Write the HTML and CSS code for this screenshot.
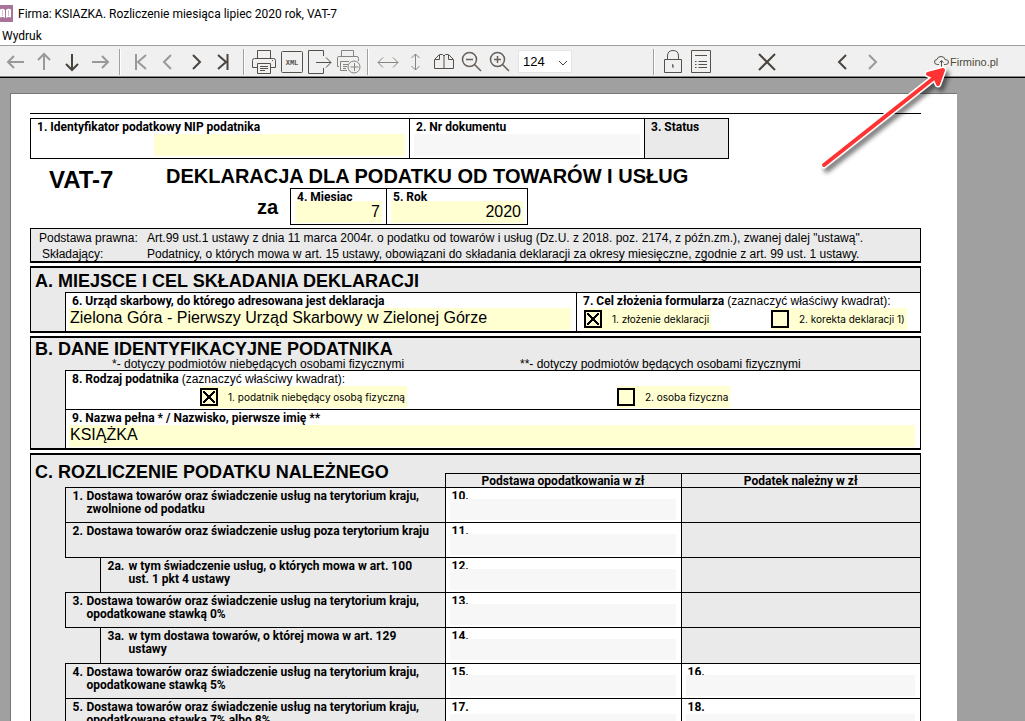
FILE: index.html
```html
<!DOCTYPE html>
<html lang="pl">
<head>
<meta charset="utf-8">
<title>Firma: KSIAZKA. Rozliczenie miesiąca lipiec 2020 rok, VAT-7</title>
<link rel="stylesheet" href="styles.css">
</head>
<body>
<header class="titlebar">
  <svg class="app-icon" width="13" height="17" viewBox="0 0 13 17" aria-hidden="true"><rect width="13" height="17" fill="#a8749a"/><path d="M0 4.500Q3 3 5 5V13Q3 11.500 0 12.500ZM6 5Q8 3 11 4.500V12.500Q8 11.500 6 13Z" fill="#fff"/><path d="M2.500 5V11M8.500 5V11" stroke="#d9bfd0"/></svg>
  <h1 class="window-title">Firma: KSIAZKA. Rozliczenie miesiąca lipiec 2020 rok, VAT-7</h1>
</header>
<nav class="menubar"><button class="menu-item">Wydruk</button></nav>

<div class="toolbar" role="toolbar" aria-label="Podgląd wydruku">
  <div class="group">
    <button class="tool dim" aria-label="W lewo"><svg viewBox="0 0 28 28"><path d="M22 14H6M12 8L6 14L12 20"/></svg></button>
    <button class="tool dim" aria-label="W górę"><svg viewBox="0 0 28 28"><path d="M14 22V6M8 12L14 6L20 12"/></svg></button>
    <button class="tool" aria-label="W dół"><svg viewBox="0 0 28 28"><path d="M14 6V22M8 16L14 22L20 16"/></svg></button>
    <button class="tool dim" aria-label="W prawo"><svg viewBox="0 0 28 28"><path d="M6 14H22M16 8L22 14L16 20"/></svg></button>
  </div>
  <div class="group">
    <button class="tool dim" aria-label="Pierwsza strona"><svg viewBox="0 0 28 28"><path d="M10 6V22M20 7L12 14L20 21"/></svg></button>
    <button class="tool dim" aria-label="Poprzednia strona"><svg viewBox="0 0 28 28"><path d="M17 7L10 14L17 21"/></svg></button>
    <button class="tool" aria-label="Następna strona"><svg viewBox="0 0 28 28"><path d="M11 7L18 14L11 21"/></svg></button>
    <button class="tool" aria-label="Ostatnia strona"><svg viewBox="0 0 28 28"><path d="M8 7L16 14L8 21M17.500 6V22"/></svg></button>
  </div>
  <div class="group">
    <button class="tool thin" aria-label="Drukuj"><svg viewBox="0 0 28 28"><path d="M7.500 10V2.500H20.500V10M7 19.500H2.500V12.500Q2.500 10.500 4.500 10.500H23.500Q25.500 10.500 25.500 12.500V19.500H21M7.500 15.500H20.500V25.500H7.500ZM10 18.500H18M10 20.500H18M10 22.500H15M22 12.500H23"/></svg></button>
    <button class="tool thin" aria-label="XML"><svg viewBox="0 0 28 28"><rect x="3.500" y="3.500" width="21" height="21" rx="1"/><text class="xml" x="14" y="17">XML</text></svg></button>
    <button class="tool thin" aria-label="Eksport"><svg viewBox="0 0 28 28"><path d="M17.500 8V2.500H2.500V25.500H17.500V20M10 14.500H25M20 9.500L25 14.500L20 19.500"/></svg></button>
    <button class="tool thin soft" aria-label="Dodaj wydruk"><svg viewBox="0 0 28 28"><path d="M7.500 8V2.500H19.500V8M5 18.500H3.500V9.500Q3.500 8.500 5 8.500H23Q24.500 8.500 24.500 10.500V13M6.500 13.500H15M6.500 13.500V22.500H13M9 16.500H14M9 18.500H13M9 20.500H12M20.500 15V23M16.500 19H24.500"/><circle cx="20" cy="19" r="6"/></svg></button>
  </div>
  <div class="group">
    <button class="tool thin soft" aria-label="Szerokość strony"><svg viewBox="0 0 28 28"><path d="M4 14.500H24M9 9.500L4 14.500L9 19.500M19 9.500L24 14.500L19 19.500"/></svg></button>
    <button class="tool thin soft" aria-label="Wysokość strony"><svg viewBox="0 0 28 28"><path d="M13.500 6V22M9.500 10L13.500 6L17.500 10M9.500 18L13.500 22L17.500 18"/></svg></button>
    <button class="tool thin" aria-label="Cała strona"><svg viewBox="0 0 28 28"><path d="M14 20.500H4.500V11.500L9.500 6.500H12.500L14 8L15.500 6.500H18.500L23.500 11.500V20.500H14V8M9.500 7V11.500H5M18.500 7V11.500H23"/></svg></button>
    <button class="tool mid" aria-label="Pomniejsz"><svg viewBox="0 0 28 28"><circle cx="11.500" cy="11.500" r="7"/><path d="M16.500 16.500L23 23M8 11.500H15"/></svg></button>
    <button class="tool mid" aria-label="Powiększ"><svg viewBox="0 0 28 28"><circle cx="11.500" cy="11.500" r="7"/><path d="M16.500 16.500L23 23M8 11.500H15M11.500 8V15"/></svg></button>
    <div class="zoom">
      <select class="zoom-select" aria-label="Powiększenie"><option>124</option></select>
      <svg class="zoom-chevron" width="10" height="6" viewBox="0 0 10 6" aria-hidden="true"><path d="M1 1L5 5L9 1"/></svg>
    </div>
  </div>
  <div class="group after-zoom">
    <button class="tool thin" aria-label="Zablokuj"><svg viewBox="0 0 28 28"><path d="M4.500 11.500H21.500V24.500H4.500ZM7.500 11V8Q7.500 2.500 13 2.500T18.500 8V11M13 16.500V20M12.500 16.500V18.500"/></svg></button>
    <button class="tool thin" aria-label="Lista"><svg viewBox="0 0 28 28"><path d="M3.500 2.500H22.500V24.500H3.500ZM7 7.500H19M10.500 13.500H19M10.500 16.500H19M10.500 19.500H19M7 13.500H8.500M7 16.500H8.500M7 19.500H8.500"/></svg></button>
  </div>
  <button class="tool close" aria-label="Zamknij"><svg viewBox="0 0 28 28"><path d="M6 6L22 22M22 6L6 22"/></svg></button>
  <div class="paging">
    <button class="tool" aria-label="Wstecz"><svg viewBox="0 0 28 28"><path d="M17 7L10 14L17 21"/></svg></button>
    <button class="tool dim" aria-label="Dalej"><svg viewBox="0 0 28 28"><path d="M10 7L17 14L10 21"/></svg></button>
  </div>
  <button class="cloud"><svg width="15" height="13" viewBox="0 0 15 13" aria-hidden="true"><path d="M5 9.500H3.500Q.500 9.500 .500 7T3 4.500Q3.500 1.500 7 1.500T11 4.500Q14.500 4.500 14.500 7T11.500 9.500H10M7.500 12V5.500M5.500 7.500L7.500 5.500L9.500 7.500"/></svg>Firmino.pl</button>
</div>

<main class="workspace">
  <form class="page">
    <div class="ident">
      <div class="box nip"><label class="cap" for="f1">1. Identyfikator podatkowy NIP podatnika</label><input class="field" id="f1"></div>
      <div class="box docno"><label class="cap" for="f2">2. Nr dokumentu</label><input class="field grey" id="f2"></div>
      <div class="box status"><span class="cap">3. Status</span></div>
    </div>

    <div class="heading">
      <h2 class="code">VAT-7</h2>
      <div class="heading-main">
        <h2 class="form-title">DEKLARACJA DLA PODATKU OD TOWARÓW I USŁUG</h2>
        <div class="period">
          <span class="za">za</span>
          <div class="period-boxes">
            <div class="box month"><label class="cap" for="f4">4. Miesiąc</label><input class="field num" id="f4" value="7"></div>
            <div class="box year"><label class="cap" for="f5">5. Rok</label><input class="field num" id="f5" value="2020"></div>
          </div>
        </div>
      </div>
    </div>

    <dl class="legal">
      <dt>Podstawa prawna:</dt><dd>Art.99 ust.1 ustawy z dnia 11 marca 2004r. o podatku od towarów i usług (Dz.U. z 2018. poz. 2174, z późn.zm.), zwanej dalej "ustawą".</dd>
      <dt class="second">Składający:</dt><dd>Podatnicy, o których mowa w art. 15 ustawy, obowiązani do składania deklaracji za okresy miesięczne, zgodnie z art. 99 ust. 1 ustawy.</dd>
    </dl>

    <section class="section">
      <h3 class="section-title">A. MIEJSCE I CEL SKŁADANIA DEKLARACJI</h3>
      <div class="rows">
        <div class="row split">
          <div class="cell office"><label class="cap" for="f6">6. Urząd skarbowy, do którego adresowana jest deklaracja</label><input class="field text" id="f6" value="Zielona Góra - Pierwszy Urząd Skarbowy w Zielonej Górze"></div>
          <div class="cell purpose"><span class="cap">7. Cel złożenia formularza <span class="plain">(zaznaczyć właściwy kwadrat):</span></span>
            <div class="options">
              <label class="option"><input type="checkbox" class="check" checked>1. złożenie deklaracji</label>
              <label class="option"><input type="checkbox" class="check">2. korekta deklaracji 1)</label>
            </div>
          </div>
        </div>
      </div>
    </section>

    <section class="section">
      <h3 class="section-title tight">B. DANE IDENTYFIKACYJNE PODATNIKA</h3>
      <div class="notes"><span>*- dotyczy podmiotów niebędących osobami fizycznymi</span><span>**- dotyczy podmiotów będących osobami fizycznymi</span></div>
      <div class="rows">
        <div class="row cell"><span class="cap">8. Rodzaj podatnika <span class="plain">(zaznaczyć właściwy kwadrat):</span></span>
          <div class="options kind">
            <label class="option"><input type="checkbox" class="check" checked>1. podatnik niebędący osobą fizyczną</label>
            <label class="option"><input type="checkbox" class="check">2. osoba fizyczna</label>
          </div>
        </div>
        <div class="row cell"><label class="cap" for="f9">9. Nazwa pełna * / Nazwisko, pierwsze imię **</label><input class="field text" id="f9" value="KSIĄŻKA"></div>
      </div>
    </section>

    <section class="section settlement">
      <table class="tax">
        <colgroup><col class="c-gutter"><col class="c-indent"><col class="c-label"><col class="c-base"><col></colgroup>
        <thead>
          <tr class="spacer"><th colspan="3" rowspan="2" class="bare"><h3 class="section-title">C. ROZLICZENIE PODATKU NALEŻNEGO</h3></th><td colspan="2" class="bare"></td></tr>
          <tr class="colheads"><th>Podstawa opodatkowania w zł</th><th>Podatek należny w zł</th></tr>
        </thead>
        <tbody>
          <tr><td class="bare"></td><th colspan="2" class="item"><div class="entry"><span>1.</span><span>Dostawa towarów oraz świadczenie usług na terytorium kraju,<br>zwolnione od podatku</span></div></th><td class="amount"><label class="cap" for="f10">10.</label><input class="field grey" id="f10"></td><td></td></tr>
          <tr><td class="bare"></td><th colspan="2" class="item"><div class="entry"><span>2.</span><span>Dostawa towarów oraz świadczenie usług poza terytorium kraju</span></div></th><td class="amount"><label class="cap" for="f11">11.</label><input class="field grey" id="f11"></td><td></td></tr>
          <tr><td colspan="2" class="bare"></td><th class="item"><div class="entry sub"><span>2a.</span><span>w tym świadczenie usług, o których mowa w art. 100<br>ust. 1 pkt 4 ustawy</span></div></th><td class="amount"><label class="cap" for="f12">12.</label><input class="field grey" id="f12"></td><td></td></tr>
          <tr><td class="bare"></td><th colspan="2" class="item"><div class="entry"><span>3.</span><span>Dostawa towarów oraz świadczenie usług na terytorium kraju,<br>opodatkowane stawką 0%</span></div></th><td class="amount"><label class="cap" for="f13">13.</label><input class="field grey" id="f13"></td><td></td></tr>
          <tr class="tall"><td colspan="2" class="bare"></td><th class="item"><div class="entry sub"><span>3a.</span><span>w tym dostawa towarów, o której mowa w art. 129<br>ustawy</span></div></th><td class="amount"><label class="cap" for="f14">14.</label><input class="field grey" id="f14"></td><td></td></tr>
          <tr><td class="bare"></td><th colspan="2" class="item"><div class="entry"><span>4.</span><span>Dostawa towarów oraz świadczenie usług na terytorium kraju,<br>opodatkowane stawką 5%</span></div></th><td class="amount"><label class="cap" for="f15">15.</label><input class="field grey" id="f15"></td><td class="amount"><label class="cap" for="f16">16.</label><input class="field grey" id="f16"></td></tr>
          <tr class="roomy"><td class="bare"></td><th colspan="2" class="item"><div class="entry"><span>5.</span><span>Dostawa towarów oraz świadczenie usług na terytorium kraju,<br>opodatkowane stawką 7% albo 8%</span></div></th><td class="amount"><label class="cap" for="f17">17.</label><input class="field grey" id="f17"></td><td class="amount"><label class="cap" for="f18">18.</label><input class="field grey" id="f18"></td></tr>
        </tbody>
      </table>
    </section>
  </form>
</main>

<svg class="pointer" width="150" height="130" viewBox="0 0 150 130" aria-hidden="true">
  <g class="pointer-halo"><path d="M15 110L130 19"/><path class="head" d="M119 19L134 15L129 29L126 22Z"/></g>
  <g class="pointer-core"><path d="M15 110L130 19"/><path class="head" d="M119 19L134 15L129 29L126 22Z"/></g>
</svg>
</body>
</html>
```

FILE: styles.css
```css
* { box-sizing: border-box; }

body {
  margin: 0;
  height: 100vh;
  display: flex;
  flex-direction: column;
  overflow: hidden;
  position: relative;
  background: #fff;
  color: #000;
  font-family: "Liberation Sans", Arial, sans-serif;
  font-size: 12px;
}

h1, h2, h3 { margin: 0; }
button, input, select { font: inherit; color: inherit; }
button { border: 0; background: none; padding: 0; }

/* window chrome */
.titlebar {
  flex: none;
  display: flex;
  align-items: center;
  gap: 5px;
  height: 27px;
}
.window-title, .menu-item {
  font: 400 12px/18px Roboto, "Open Sans", sans-serif;
}
.menubar { flex: none; height: 18px; padding-left: 2px; display: flex; align-items: center; }

.toolbar {
  flex: none;
  display: flex;
  align-items: center;
  height: 33px;
  padding-left: 2px;
  background: #f0f0f0;
  border-top: 1px solid #a0a0a0;
  border-bottom: 1px solid #000;
  box-shadow: inset 0 -1px #8a8a8a;
}
.group { display: flex; align-items: center; }
.group + .group::before {
  content: "";
  width: 1px;
  height: 26px;
  margin: 0 5px;
  background: #fff;
  border-left: 1px solid #a0a0a0;
}
.group.after-zoom { margin-left: 76px; }
.tool { width: 28px; height: 28px; flex: none; }
.tool svg {
  display: block;
  width: 28px;
  height: 28px;
  fill: none;
  stroke: #4a443e;
  stroke-width: 2;
}
.tool.dim svg { stroke: #999; }
.tool.thin svg { stroke-width: 1; stroke: #55504a; }
.tool.thin.soft svg { stroke: #85857f; }
.tool.mid svg { stroke: #66605a; stroke-width: 1.5; }
.tool .xml {
  font: 700 7px "Liberation Mono", monospace;
  text-anchor: middle;
  fill: #55504a;
  stroke: none;
}
.close { margin-left: 37px; }
.paging { display: flex; gap: 2px; margin-left: 48px; }
.zoom { position: relative; width: 54px; height: 23px; margin-left: 4px; }
.zoom-select {
  width: 100%;
  height: 100%;
  padding: 0 4px;
  border: 1px solid #e4e4e4;
  background: #fff;
  appearance: none;
  font-size: 13px;
}
.zoom-chevron {
  position: absolute;
  right: 4px;
  top: 10px;
  fill: none;
  stroke: #444;
  pointer-events: none;
}
.cloud { display: flex; align-items: center; gap: 1px; margin-left: 47px; font-size: 11px; color: #4c4c38; }
.cloud svg { fill: none; stroke: #55504a; }

/* document */
.workspace {
  flex: 1;
  min-height: 0;
  overflow: hidden;
  padding: 15px 68px 0 10px;
  background: #a0a0a0;
}
.page {
  background: #fff;
  border-top: 1px solid #777;
  border-left: 1px solid #777;
  padding: 19px 36px 0 19px;
}

.ident { border-top: 1px solid #000; padding-top: 4px; display: flex; height: 46px; }
.box {
  display: flex;
  flex-direction: column;
  border: 1px solid #000;
}
.box + .box { border-left: 0; }
.nip { width: 380px; }
.docno { width: 235px; }
.status { width: 84px; background: #eaeaea; }
.cap, .entry, .colheads { font-family: Roboto, "Liberation Sans", sans-serif; }
.cap {
  display: block;
  height: 15px;
  padding-left: 6px;
  font-weight: 700;
  font-size: 12px;
  line-height: 16px;
  white-space: nowrap;
}
.plain { font-family: "Liberation Sans", Arial, sans-serif; font-weight: 400; }
.field {
  position: relative;
  display: block;
  height: 22px;
  min-width: 0;
  margin: 0 4px;
  padding: 0 2px;
  border: 0;
  border-radius: 0;
  background: #ffffd2;
  font-size: 16px;
}
.field.grey { background: #f7f7f7; }
.field.num { text-align: right; }
.field.text { padding: 0 0 2px 1px; }
.nip .field { margin-left: 123px; }

.heading { display: flex; padding-top: 6px; height: 69px; }
.code { font-size: 24px; line-height: 29px; width: 136px; padding-left: 19px; }
.form-title { font-size: 20px; line-height: 23px; white-space: nowrap; }
.period { display: flex; }
.za { width: 124px; padding-left: 91px; font: 700 20px/38px "Liberation Sans", Arial, sans-serif; }
.period-boxes { display: flex; height: 37px; }
.period .cap { height: 12px; }
.month { width: 97px; }
.year { width: 141px; }

.legal {
  display: grid;
  grid-template-columns: 108px 1fr;
  margin: 0;
  padding: 1px 0 0 8px;
  height: 35px;
  border: 1px solid #000;
  border-bottom-width: 2px;
  background: #eaeaea;
  line-height: 16px;
  white-space: nowrap;
}
.legal dd { margin: 0; }
.legal .second { padding-left: 3px; }

.section {
  margin-top: 3px;
  border: 1px solid #000;
  border-width: 2px 1px;
  background: #eaeaea;
}
.section-title { padding-left: 4px; font-size: 18px; line-height: 26px; height: 24px; white-space: nowrap; text-align: left; }
.section-title.tight { line-height: 22px; height: 19px; }
.notes { display: grid; grid-template-columns: 408px 1fr; height: 13px; padding-left: 81px; line-height: 14px; }
.rows { margin-left: 34px; border-left: 1px solid #000; background: #fff; }
.row { border-top: 1px solid #000; height: 39px; }
.split { display: grid; grid-template-columns: 510px 1fr; }
.cell .field { width: calc(100% - 8px); margin-left: 3px; }
.purpose { border-left: 1px solid #000; }
.options { display: grid; grid-template-columns: 187px 1fr; justify-items: start; padding-left: 7px; }
.options.kind { grid-template-columns: 417px 1fr; padding-left: 134px; }
.option {
  display: flex;
  align-items: center;
  gap: 10px;
  height: 22px;
  padding-right: 2px;
  background: #ffffd2;
  font-family: Inter, "Liberation Sans", sans-serif;
  font-size: 10px;
  white-space: nowrap;
}
.check {
  appearance: none;
  width: 18px;
  height: 18px;
  margin: 0;
  border: 2px solid #000;
}
.check:checked {
  background:
    linear-gradient(45deg, transparent 43%, #000 44% 56%, transparent 57%) center / 12px 12px no-repeat,
    linear-gradient(-45deg, transparent 43%, #000 44% 56%, transparent 57%) center / 12px 12px no-repeat;
}

.tax { width: 100%; border-collapse: collapse; table-layout: fixed; }
.c-gutter { width: 34px; }
.c-indent { width: 35px; }
.c-label { width: 345px; }
.c-base { width: 236px; }
.tax th, .tax td { padding: 0; border: 1px solid #000; border-right: 0; vertical-align: top; }
.tax .bare { border: 0; }
.tax .spacer { height: 18px; }
.tax .section-title { line-height: 34px; height: 32px; }
.colheads { height: 14px; line-height: 13px; }
.tax .colheads th { height: 14px; padding-top: 1px; line-height: 12px; }
.tax tbody tr { height: 35px; }
.tax tbody .tall { height: 36px; }
.entry { display: flex; padding: 2px 0 0 7px; line-height: 13px; text-align: left; white-space: nowrap; height: 34px; }
.entry span:first-child { width: 14px; flex: none; }
.entry.sub span:first-child { width: 21px; }
.tax .amount { background: #fff; }
.amount .cap { height: 11px; }
.amount .field { height: 21px; width: calc(100% - 9px); margin: 0 0 2px 4px; }
.roomy .cap { height: 15px; }
.settlement { margin-top: 3px; }

/* callout arrow lying over the window */
.pointer { position: absolute; left: 809px; top: 55px; pointer-events: none; filter: drop-shadow(3px 4px 2px rgba(0, 0, 0, .5)); }
.pointer path { fill: none; stroke-linecap: round; stroke-linejoin: round; }
.pointer-halo path { stroke: #fff; stroke-width: 7; }
.pointer-core path { stroke: #f33; stroke-width: 4; }
.pointer-core .head { fill: #f33; }
```
